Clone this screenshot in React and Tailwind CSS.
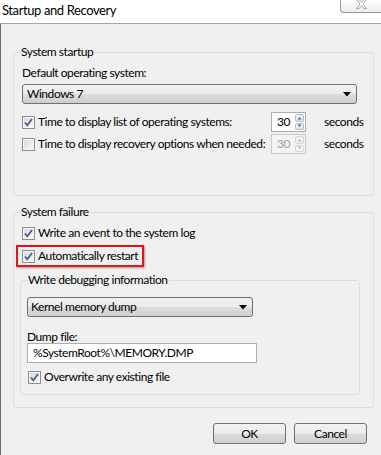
import React from 'react'

const btnBg = 'bg-[linear-gradient(#f2f2f2,#ebebeb_50%,#dddddd_50%,#cfcfcf)]'

const Check = ({ checked = true }) => (
  <span className='w-[13px] h-[13px] border border-[#8f8f8f] bg-white flex items-center justify-center shrink-0'>
    <span className='w-[11px] h-[11px] border border-[#f4f4f4] bg-linear-to-br from-[#d8d8d8] to-[#fafafa] flex items-center justify-center'>
      {checked && (
        <svg width='9' height='9' viewBox='0 0 9 9'>
          <path d='M1 4.5 L3.3 7.3 L8 1' fill='none' stroke='#4a5f97' strokeWidth='1.8' />
        </svg>
      )}
    </span>
  </span>
)

const CheckRow = ({ label, checked, className = '' }) => (
  <div className={'flex items-center gap-[3px] h-4 shrink-0 ' + className}>
    <Check checked={checked} />
    <span className='leading-4 whitespace-nowrap'>{label}</span>
  </div>
)

const Arrow = () => (
  <svg width='8' height='5' viewBox='0 0 8 5'>
    <path d='M0 0 H8 L4 4.5 Z' fill='#000' />
  </svg>
)

const Select = ({ value, className = '' }) => (
  <div className={'h-[20px] border border-[#707070] rounded-[3px] flex items-center justify-between pr-[5px] ' + btnBg + ' ' + className}>
    <span className='leading-4'>{value}</span>
    <Arrow />
  </div>
)

const Spinner = ({ disabled }) => (
  <div className={'w-[35px] h-[20px] border flex shrink-0 ' + (disabled ? 'border-[#c9c9c9] bg-[#f4f4f4] text-[#a0a0a0]' : 'border-[#abadb3] bg-white')}>
    <span className='flex-1 pl-[5px] leading-[18px]'>30</span>
    <div className='w-[9px] flex flex-col gap-[1px] py-[1px] mr-[1px]'>
      {['M0.5 3.5 L2.5 1 L4.5 3.5 Z', 'M0.5 0.5 L2.5 3 L4.5 0.5 Z'].map((d, i) => (
        <div key={i} className={'flex-1 border rounded-[2px] flex items-center justify-center ' + (disabled ? 'border-[#d6d6d6] bg-[#f2f2f2]' : 'border-[#b2bccb] bg-linear-to-b from-[#f4f7fb] to-[#dde6f0]')}>
          <svg width='5' height='4' viewBox='0 0 5 4'>
            <path d={d} fill={disabled ? '#b8b8b8' : '#4d6185'} />
          </svg>
        </div>
      ))}
    </div>
  </div>
)

const Button = ({ children }) => (
  <div className={'w-[73px] h-[21px] border border-[#707070] rounded-[3px] flex items-center justify-center leading-4 ' + btnBg}>
    {children}
  </div>
)

export default function App() {
  return (
    <div className='w-[381px] h-[455px] overflow-hidden bg-white flex flex-col text-[12px] tracking-[-0.45px] text-black' style={{ fontFamily: 'Lato, "Noto Sans", sans-serif' }}>
      {/* title bar */}
      <div className='h-[23px] shrink-0 flex justify-between items-start'>
        <span className='pl-[2px] pt-[2px] text-[13px] tracking-[-0.4px] leading-[16px]'>Startup and Recovery</span>
        <div className='w-[41px] h-[13px] border-l border-b border-[#9a9a9a] rounded-bl-[4px] bg-linear-to-b from-white to-[#ececec] flex justify-center'>
          <svg width='11' height='9' viewBox='0 0 11 9'>
            <path d='M0.5 -0.5 H3 L5.5 2.3 L8 -0.5 H10.5 L7 4 L10.5 8.5 H8 L5.5 5.7 L3 8.5 H0.5 L4 4 Z' fill='#fff' stroke='#8c8c8c' strokeWidth='0.8' />
          </svg>
        </div>
      </div>

      {/* dialog body */}
      <div className='flex-1 bg-[#f0f0f0] border-t border-l border-t-[#a5a5a5] border-l-[#6b6b6b] pl-[12px] pt-[20px] flex flex-col'>
        <fieldset className='w-[361px] border border-[#d5dfe5] rounded-[3px] pl-[8px] pb-[41px]'>
          <legend className='px-[1px] -ml-[2px] leading-4'>System startup</legend>
          <div className='mt-[5px] leading-4'>Default operating system:</div>
          <Select value='Windows 7' className='mt-[3px] w-[335px] pl-[4px]' />
          <div className='mt-[8px] h-[20px] flex items-center'>
            <CheckRow label='Time to display list of operating systems:' checked className='w-[249px]' />
            <Spinner />
            <span className='ml-[18px] leading-4'>seconds</span>
          </div>
          <div className='mt-[2px] h-[20px] flex items-center'>
            <CheckRow label='Time to display recovery options when needed:' checked={false} className='w-[249px]' />
            <Spinner disabled />
            <span className='ml-[18px] leading-4'>seconds</span>
          </div>
        </fieldset>

        <fieldset className='mt-[8px] w-[361px] border border-[#d5dfe5] rounded-[3px] pl-[6px] pb-[12px]'>
          <legend className='px-[1px] leading-4'>System failure</legend>
          <CheckRow label='Write an event to the system log' checked className='mt-[5px] ml-[2px]' />
          <div className='mt-[4px] -ml-[4px] w-[128px] border-2 border-[#e5141b] py-[1px] pl-[4px] shadow-[1px_1px_2px_rgba(0,0,0,0.35)]'>
            <CheckRow label='Automatically restart' checked />
          </div>

          <fieldset className='mt-[5px] w-[340px] border border-[#d5dfe5] rounded-[3px] pl-[6px] pb-[9px]'>
            <legend className='px-[1px] leading-4'>Write debugging information</legend>
            <Select value='Kernel memory dump' className='mt-[9px] w-[226px] pl-[3px]' />
            <div className='mt-[13px] leading-[13px]'>Dump file:</div>
            <div className='w-[230px] h-[20px] border border-[#abadb3] bg-white pl-[5px] leading-[18px]'>%SystemRoot%\MEMORY.DMP</div>
            <CheckRow label='Overwrite any existing file' checked className='mt-[6px] ml-[1px]' />
          </fieldset>
        </fieldset>

        <div className='mt-[15px] pr-[14px] flex justify-end gap-[8px]'>
          <Button>OK</Button>
          <Button>Cancel</Button>
        </div>
      </div>
    </div>
  )
}
